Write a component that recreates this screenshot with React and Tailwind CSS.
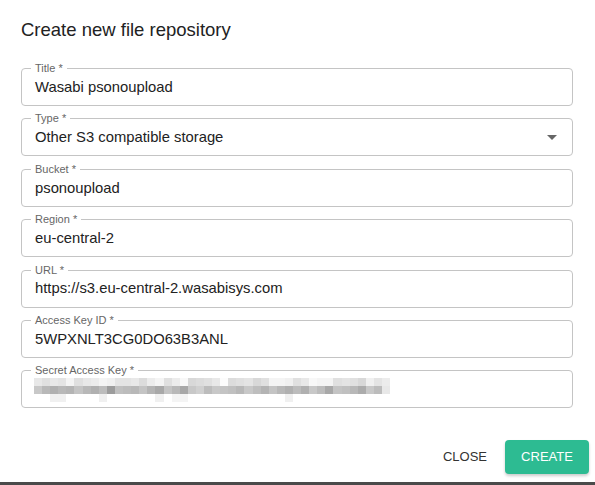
import React from 'react';

const fields = [
  { label: 'Title', value: 'Wasabi psonoupload' },
  { label: 'Type', value: 'Other S3 compatible storage', select: true },
  { label: 'Bucket', value: 'psonoupload' },
  { label: 'Region', value: 'eu-central-2' },
  { label: 'URL', value: 'https://s3.eu-central-2.wasabisys.com' },
  { label: 'Access Key ID', value: '5WPXNLT3CG0DO63B3ANL' },
  { label: 'Secret Access Key', secret: true },
];

// blurred secret, three rows of grey blocks
const blur = [
  [232, 224, 232, 228, 244, 224, 232, 236, 244, 240, 228, 228, 232, 220, 236, 244, 224, 236, 248, 216, 220, 224, 232, 252, 220, 224, 228, 216, 224, 244, 244, 240, 224, 232, 248, 244, 244, 224, 228, 224, 216, 240, 228, 236],
  [200, 184, 176, 184, 180, 196, 184, 176, 188, 156, 192, 188, 184, 196, 180, 168, 196, 184, 168, 200, 208, 188, 200, 196, 192, 184, 200, 190, 180, 196, 184, 176, 188, 176, 200, 188, 168, 196, 192, 184, 172, 200, 188, 232],
  [255, 255, 240, 240, 255, 255, 255, 255, 240, 255, 255, 255, 255, 255, 255, 240, 255, 244, 244, 255, 255, 255, 255, 255, 255, 255, 255, 255, 255, 255, 255, 240, 255, 255, 255, 255, 255, 255, 255, 255, 255, 255, 255, 255],
];

function gray(v) {
  return `rgb(${v},${v},${v})`;
}

function Field({ label, value, select, secret }) {
  return (
    <div className="relative h-[38px] rounded-[4px] border border-[#c4c4c4]">
      <span className="absolute -top-[8px] left-[9px] bg-white px-[4px] text-[11px] leading-[14px] text-[#666]">
        {label} *
      </span>
      {secret ? (
        <div className="flex h-full flex-col justify-center pl-[12px] pt-[1px]">
          {blur.map((row, r) => (
            <div key={r} className="flex h-[8px] w-[356px]">
              {row.map((v, i) => (
                <div key={i} className="h-full flex-1" style={{ backgroundColor: gray(v) }} />
              ))}
            </div>
          ))}
        </div>
      ) : (
        <div className="flex h-full items-center pl-[13px] pr-[14px] text-[14.8px] text-[#222]">
          <span className="flex-1">{value}</span>
          {select && (
            <svg width="10" height="5" viewBox="0 0 10 5" className="mr-[1px]">
              <path d="M0 0h10L5 5z" fill="#666" />
            </svg>
          )}
        </div>
      )}
    </div>
  );
}

export default function App() {
  return (
    <div className="h-[485px] w-[595px] overflow-hidden bg-white font-['Liberation_Sans',Arial,sans-serif]">
      <div className="flex h-[482px] flex-col">
        <h2 className="px-[21px] pt-[16px] text-[18.5px] font-normal leading-[28px] text-[#222]">
          Create new file repository
        </h2>
        <div className="mt-[24px] flex flex-col gap-[12.4px] px-[21px] pr-[22px]">
          {fields.map((f) => (
            <Field key={f.label} {...f} />
          ))}
        </div>
        <div className="mt-auto flex items-center justify-end gap-[10px] pb-[8px] pr-[6px]">
          <button className="px-[8px] text-[13px] font-normal text-[#333]">CLOSE</button>
          <button className="h-[34px] w-[84px] rounded-[4px] bg-[#2dbb92] text-[13px] font-normal text-white shadow-[0_2px_3px_rgba(0,0,0,0.2)]">
            CREATE
          </button>
        </div>
      </div>
      <div className="h-[3px] bg-[#4a4a4a]" />
    </div>
  );
}
